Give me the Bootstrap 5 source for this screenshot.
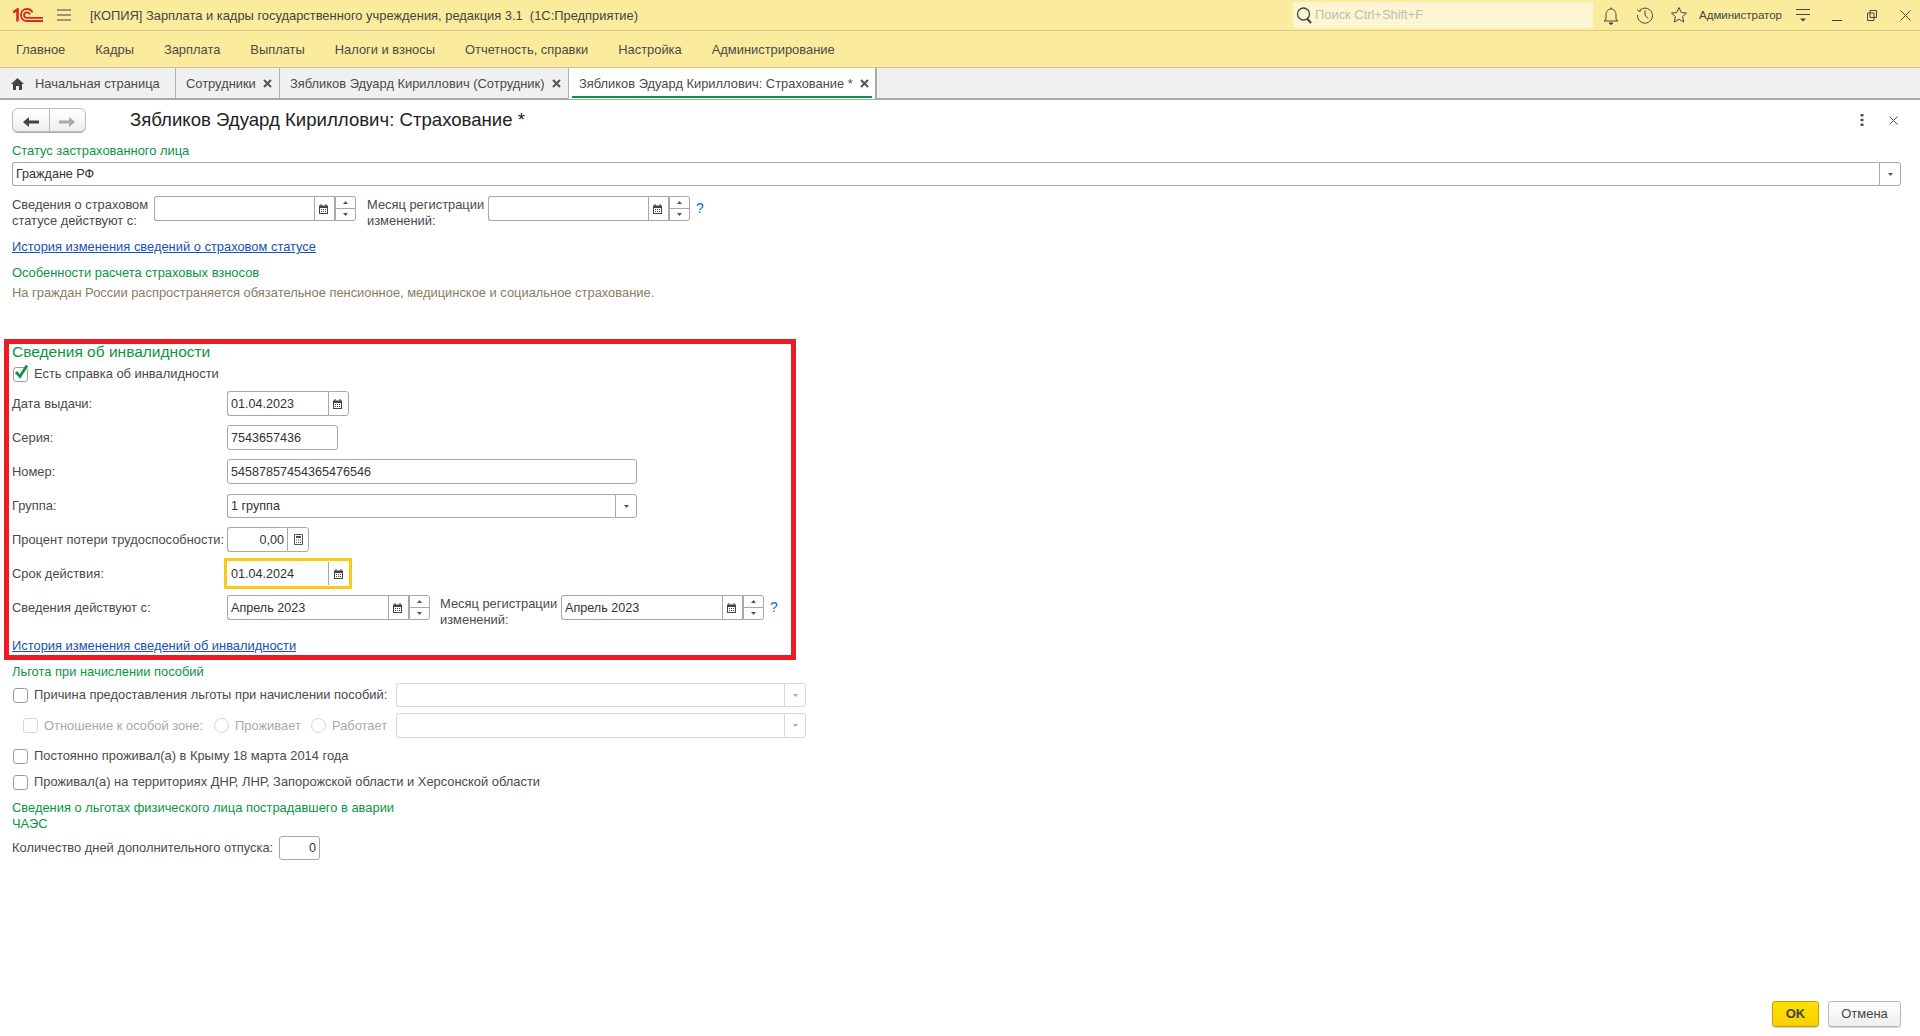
<!DOCTYPE html>
<html lang="ru">
<head>
    <meta charset="UTF-8">
    <meta name="viewport" content="width=device-width, initial-scale=1.0">
    <title>Зябликов Эдуард Кириллович: Страхование</title>
    <link rel="stylesheet" href="https://cdn.jsdelivr.net/npm/bootstrap@5.3.0/dist/css/bootstrap.min.css">
    <style>
        html, body { height: 100%; }
        body { font: 12.9px/16px "Liberation Sans", Arial, sans-serif; color: #4a4a4a; background: #fff; overflow: hidden; }
        .app { height: 1036px; }

        /* window title */
        .title-bar { height: 31px; background: #fbec9d; border-bottom: 1px solid #d8c98a; padding-left: 13px; color: #444; }
        .burger { margin-left: 14px; }
        .app-name { margin: 1px 0 0 19px; }
        .search-box { width: 300px; height: 26px; margin-left: auto; background: #fdf6d3; border-radius: 2px; padding-left: 3px; color: #bdbdb0; }
        .search-box span { margin-left: 2px; }
        .top-icon { width: 20px; height: 20px; }
        .top-icon + .top-icon { margin-left: 14px; }
        .user-name { font-size: 11.5px; margin: 0 0 0 10px; color: #444; }
        .win-lines { margin-left: 14px; }
        .win-min { margin-left: 22px; }
        .win-max { margin-left: 25px; }
        .win-close { margin-left: 23px; margin-right: 9px; }

        /* sections menu */
        .app-menu { height: 37px; background: #fbec9d; border-bottom: 1px solid #cfc388; padding-left: 1px; }
        .app-menu .nav-link { color: #4a4a4a; padding: 0 15px; line-height: 37px; }

        /* open tabs */
        .app-tabs { height: 32px; background: #f0f0f0; border-bottom: 2px solid #a8a8a8; flex-wrap: nowrap; }
        .app-tabs .nav-link { display: flex; align-items: center; height: 31px; margin: 0; padding: 0 7px 0 10px; border: 0; border-right: 1px solid #b0b0b0; border-radius: 0; color: #4a4a4a; background: transparent; }
        .app-tabs .nav-link.active { position: relative; background: #fff; color: #4a4a4a; border-left: 0; border-right: 2px solid #a8a8a8; padding-right: 6px; }
        .app-tabs .nav-link.active::after { content: ""; position: absolute; left: 3px; right: 3px; bottom: 1px; height: 2px; background: #0a9545; }
        .tab-home { width: 176px; padding-left: 11px !important; }
        .tab-home svg { margin-right: 11px; }
        .tab-staff { width: 104px; }
        .tab-person { width: 289px; }
        .tab-ins { width: 308px; }
        .tab-x { margin-left: auto; }

        /* form */
        .form-pane { padding: 0 19px 0 12px; }
        .doc-head { height: 24px; margin-top: 8px; }
        .doc-title { font-size: 18.6px; line-height: 24px; color: #222; margin: 0 0 0 44px; font-weight: 400; }
        .doc-close { margin-left: 25px; margin-right: 3px; }
        .nav-btns { width: 74px; height: 24px; }
        .nav-btns .btn { padding: 0; border-color: #bcbcbc; background: linear-gradient(#fff, #efefef); box-shadow: 0 1px 0 #aaa; }
        .cap { color: #0a9545; }
        .cap-big { font-size: 15.5px; }
        .note { color: #8a7c5f; }
        .doc-link { color: #1a4fb5; text-decoration: underline; }
        .hint { color: #1173b8; font-size: 14px; line-height: 25px; margin-left: 6px; text-decoration: none; }
        .two-line { line-height: 16px; }
        .lbl-a { width: 142px; margin-top: 1px; }
        .lbl-b { width: 121px; margin: 1px 0 0 11px; }
        .lbl-c { width: 121px; margin-left: 10px; height: 25px; padding-top: 1px; }
        .lh-field { line-height: 25px; }

        .mark-box { margin-left: -8px; width: 792px; height: 321px; border: 5px solid #ed1c24; padding: 0 3px; }

        .fld { flex-wrap: nowrap; height: 25px; width: auto; }
        .fld-s { height: 24px; }
        .fld .form-control { min-width: 0; height: 100%; padding: 0 3px; font: inherit; font-size: 12.6px; color: #333; border: 1px solid #a8a8a8; border-right: 0; border-radius: 3px 0 0 3px; box-shadow: none; }
        .fld.solo .form-control { border-right: 1px solid #a8a8a8; border-radius: 3px; }
        .fld .input-group-text { justify-content: center; padding: 0; margin: 0 !important; background: #fff; border: 1px solid #a8a8a8; border-radius: 0; }
        .fld .input-group-text:last-child { border-radius: 0 3px 3px 0; }
        .fld-off .form-control, .fld-off .input-group-text { border-color: #d9d9d9; background: #fff; }
        .fld .btn-cal { width: 21px; padding-right: 2px; }
        .btn-calc { width: 22px; }
        .btn-drop { width: 22px; }
        .btn-spin { width: 21px; flex-direction: column; align-items: stretch; }
        .btn-spin i { flex: 1; display: flex; align-items: center; justify-content: center; }
        .btn-spin i + i { border-top: 1px solid #a8a8a8; }
        .w-status { width: 1889px; }
        .w-period { width: 202px; }
        .w-date { width: 122px; }
        .w-series { width: 111px; }
        .w-wide { width: 410px; }
        .w-pct { width: 82px; }
        .w-month { width: 203px; }
        .w-days { width: 41px; }
        .w-reason { width: 410px; }
        .num .form-control { text-align: right; }

        .row-lbl { width: 215px; }
        .lbl-days { width: 267px; }
        .focus-wrap { width: 128px; height: 31px; margin-left: -3px; border: 3px solid #fac91e; }
        .focus-wrap .form-control { border: 0; padding-left: 4px; height: 100%; }
        .focus-wrap .input-group-text { border: 0; border-left: 1px solid #a8a8a8; background: #fff; height: 23px; align-self: center; }

        .form-check-input { width: 15px; height: 15px; margin: 0; border: 1px solid #9a9a9a; border-radius: 3px; box-shadow: none; }
        .form-check-input:checked { background-color: #fff; background-image: none; border-color: #9a9a9a; }
        .form-check-input[type=radio] { border-radius: 50%; }
        .form-check-input:disabled { opacity: 1; border-color: #d4d4d4; background-color: #fff; }
        .tick-holder { position: relative; margin-left: 1px; display: flex; }
        .tick-holder svg { position: absolute; left: 1px; top: -3px; }
        .chk-row { height: 16px; }
        label { margin-left: 6px; }
        .lbl-reason { width: 362px; }
        .chk-zone { margin-left: 11px; }
        .lbl-zone { width: 170px; }
        .lbl-lives { width: 76px; }
        .lbl-works { width: 64px; }
        .off { color: #a9a9a9; }

        .m3 { margin-top: 3px; } .m4 { margin-top: 4px; } .m5 { margin-top: 5px; } .m6 { margin-top: 6px; }
        .m9 { margin-top: 9px; } .m10 { margin-top: 10px; } .m11 { margin-top: 11px; } .m18 { margin-top: 18px; } .m38 { margin-top: 38px; }
        .wrap-400 { width: 400px; }

        .foot { padding: 0 19px 9px 0; margin-top: auto; gap: 9px; }
        .foot .btn { height: 26px; padding: 0; font-size: 13px; line-height: 24px; border-radius: 3px; color: #444; box-shadow: 0 1px 0 rgba(0,0,0,.15); }
        .btn-ok { width: 47px; font-weight: 700; background: linear-gradient(#ffe100, #f5d000); border-color: #bfa300; }
        .btn-no { width: 73px; background: linear-gradient(#fff, #eee); border-color: #b8b8b8; }
    </style>
</head>
<body>
    <svg width="0" height="0" class="position-absolute">
        <symbol id="ic-cal" viewBox="0 0 9 10">
            <path d="M0 1.500h9V10H0z" fill="#444"/>
            <path d="M1.500 0h1v2h-1zM6.500 0h1v2h-1z" fill="#444"/>
            <path d="M1 4h7v5H1z" fill="#fff"/>
            <path d="M2 5h1v1H2zM4 5h1v1H4zM6 5h1v1H6zM2 7h1v1H2zM4 7h1v1H4zM6 7h1v1H6z" fill="#444"/>
        </symbol>
        <symbol id="ic-calc" viewBox="0 0 9 11">
            <path d="M.5.5h8v10h-8z" fill="#fff" stroke="#555"/>
            <path d="M2 2h5v2H2zM2 5.500h1v1H2zM4 5.500h1v1H4zM6 5.500h1v1H6zM2 8h1v1H2zM4 8h1v1H4zM6 8h1v1H6z" fill="#555"/>
        </symbol>
        <symbol id="ic-x" viewBox="0 0 9 9">
            <path d="M1 1l7 7M8 1L1 8" stroke="#555" stroke-width="2" fill="none"/>
        </symbol>
        <symbol id="ic-up" viewBox="0 0 5 3"><path d="M0 3L2.500 0 5 3z" fill="#555"/></symbol>
        <symbol id="ic-down" viewBox="0 0 5 3"><path d="M0 0h5L2.500 3z" fill="#555"/></symbol>
        <symbol id="ic-drop" viewBox="0 0 5 3"><path d="M0 0h5L2.500 3z" fill="#555"/></symbol>
        <symbol id="ic-drop-off" viewBox="0 0 5 3"><path d="M0 0h5L2.500 3z" fill="#aaa"/></symbol>
    </svg>

    <div class="app d-flex flex-column">
        <div class="title-bar d-flex align-items-center">
            <svg width="30" height="14" viewBox="0 0 30 14" fill="none" stroke="#d8291f">
                <path d="M0 4.500L4.500 1.500V13.500" stroke-width="2.600"/>
                <path d="M19.500 4.500C18.500 2.200 16 1 14 1 10.500 1 8 3.500 8 7s2.500 6 6 6h16" stroke-width="1.800"/>
                <path d="M17 6.500C16.500 5 15.300 4.300 14 4.300 12.300 4.300 11 5.500 11 7s1.300 2.800 3 2.800h16" stroke-width="1.800"/>
            </svg>
            <svg class="burger" width="14" height="12" viewBox="0 0 14 12" stroke="#444"><path d="M0 1h14M0 6h14M0 11h14"/></svg>
            <span class="app-name">[КОПИЯ] Зарплата и кадры государственного учреждения, редакция 3.1&nbsp; (1С:Предприятие)</span>
            <div class="search-box d-flex align-items-center">
                <svg width="17" height="19" viewBox="0 0 17 19" fill="none" stroke="#444" stroke-width="1.300"><circle cx="7.500" cy="8" r="6"/><path d="M11.500 13l3.500 4" stroke-width="2"/></svg>
                <span>Поиск Ctrl+Shift+F</span>
            </div>
            <div class="d-flex align-items-center justify-content-center top-icon ms-2">
                <svg width="16" height="19" viewBox="0 0 16 19" fill="none" stroke="#444"><path d="M8 1.500V3M3 13.500V9c0-3.500 2-6 5-6s5 2.500 5 6v4.500l2 1.500H1z"/><path d="M6 17h4l-2 1.500z" fill="#444"/></svg>
            </div>
            <div class="d-flex align-items-center justify-content-center top-icon">
                <svg width="18" height="18" viewBox="0 0 18 18" fill="none" stroke="#444"><path d="M3.500 4.500A7.500 7.500 0 1 1 1.500 9"/><path d="M1.500 3.500l1.500 2 2.200-.8"/><path d="M9 4.500V9l3 3.500"/></svg>
            </div>
            <div class="d-flex align-items-center justify-content-center top-icon">
                <svg width="18" height="18" viewBox="0 0 18 18" fill="none" stroke="#444"><path d="M9 1.500l2.300 5 5.200.6-3.900 3.500 1.100 5.400L9 13.300 4.300 16l1.100-5.400L1.500 7.100l5.200-.6z"/></svg>
            </div>
            <span class="user-name">Администратор</span>
            <svg class="win-lines" width="14" height="14" viewBox="0 0 14 14" stroke="#444"><path d="M0 1.500h14M0 6.500h14"/><path d="M4 10.500h6l-3 3z" fill="#444" stroke="none"/></svg>
            <svg class="win-min" width="10" height="14" viewBox="0 0 10 14" stroke="#444"><path d="M0 12.500h10"/></svg>
            <svg class="win-max" width="10" height="11" viewBox="0 0 10 11" fill="none" stroke="#444"><path d="M3 .5h6.500v7H3zM.5 3H7v7.500H.5z" fill="#fbec9d"/></svg>
            <svg class="win-close" width="11" height="11" viewBox="0 0 11 11" stroke="#444"><path d="M.5.5l10 10M10.500.5l-10 10"/></svg>
        </div>

        <ul class="nav app-menu">
            <li class="nav-item"><a class="nav-link" href="#">Главное</a></li>
            <li class="nav-item"><a class="nav-link" href="#">Кадры</a></li>
            <li class="nav-item"><a class="nav-link" href="#">Зарплата</a></li>
            <li class="nav-item"><a class="nav-link" href="#">Выплаты</a></li>
            <li class="nav-item"><a class="nav-link" href="#">Налоги и взносы</a></li>
            <li class="nav-item"><a class="nav-link" href="#">Отчетность, справки</a></li>
            <li class="nav-item"><a class="nav-link" href="#">Настройка</a></li>
            <li class="nav-item"><a class="nav-link" href="#">Администрирование</a></li>
        </ul>

        <ul class="nav nav-tabs app-tabs">
            <li class="nav-item"><a class="nav-link tab-home" href="#"><svg width="13" height="12" viewBox="0 0 13 12" fill="#444"><path d="M6.500 0L13 6h-2v6H8V8H5v4H2V6H0z"/></svg>Начальная страница</a></li>
            <li class="nav-item"><a class="nav-link tab-staff" href="#">Сотрудники<svg class="tab-x" width="9" height="9"><use href="#ic-x"/></svg></a></li>
            <li class="nav-item"><a class="nav-link tab-person" href="#">Зябликов Эдуард Кириллович (Сотрудник)<svg class="tab-x" width="9" height="9"><use href="#ic-x"/></svg></a></li>
            <li class="nav-item"><a class="nav-link tab-ins active" href="#">Зябликов Эдуард Кириллович: Страхование *<svg class="tab-x" width="9" height="9"><use href="#ic-x"/></svg></a></li>
        </ul>

        <div class="form-pane">
            <div class="doc-head d-flex align-items-center">
                <div class="btn-group nav-btns">
                    <button class="btn" type="button"><svg width="16" height="12" viewBox="0 0 16 12" fill="#444"><path d="M0 6l6-5v3.500h10v3H6V11z"/></svg></button>
                    <button class="btn" type="button"><svg width="16" height="12" viewBox="0 0 16 12" fill="#aaa"><path d="M16 6l-6-5v3.500H0v3h10V11z"/></svg></button>
                </div>
                <h1 class="doc-title">Зябликов Эдуард Кириллович: Страхование *</h1>
                <svg class="ms-auto" width="4" height="12" viewBox="0 0 4 12" fill="#555"><path d="M.5 0h3v2.500h-3zM.5 4.700h3v2.500h-3zM.5 9.400h3V12h-3z"/></svg>
                <svg class="doc-close" width="9" height="9" viewBox="0 0 9 9" stroke="#555"><path d="M.5.5l8 8M8.500.5l-8 8"/></svg>
            </div>

            <div class="cap m11">Статус застрахованного лица</div>
            <div class="input-group fld fld-s w-status m3">
                <input class="form-control" type="text" value="Граждане РФ">
                <span class="input-group-text btn-drop"><svg width="5" height="3"><use href="#ic-drop"/></svg></span>
            </div>

            <div class="d-flex align-items-start m10">
                <div class="two-line lbl-a">Сведения о страховом<br>статусе действуют с:</div>
                <div class="input-group fld w-period">
                    <input class="form-control" type="text">
                    <span class="input-group-text btn-cal"><svg width="9" height="10"><use href="#ic-cal"/></svg></span>
                    <span class="input-group-text btn-spin"><i><svg width="5" height="3"><use href="#ic-up"/></svg></i><i><svg width="5" height="3"><use href="#ic-down"/></svg></i></span>
                </div>
                <div class="two-line lbl-b">Месяц регистрации<br>изменений:</div>
                <div class="input-group fld w-period">
                    <input class="form-control" type="text">
                    <span class="input-group-text btn-cal"><svg width="9" height="10"><use href="#ic-cal"/></svg></span>
                    <span class="input-group-text btn-spin"><i><svg width="5" height="3"><use href="#ic-up"/></svg></i><i><svg width="5" height="3"><use href="#ic-down"/></svg></i></span>
                </div>
                <a class="hint" href="#">?</a>
            </div>

            <div class="m10"><a class="doc-link" href="#">История изменения сведений о страховом статусе</a></div>
            <div class="cap m10">Особенности расчета страховых взносов</div>
            <div class="note m4">На граждан России распространяется обязательное пенсионное, медицинское и социальное страхование.</div>

            <div class="mark-box m38">
                <div class="cap cap-big">Сведения об инвалидности</div>
                <div class="d-flex align-items-center chk-row m6">
                    <span class="tick-holder">
                        <input class="form-check-input" type="checkbox" id="hasCert" checked>
                        <svg width="16" height="16" viewBox="0 0 16 16" fill="none" stroke="#0a9545" stroke-width="2.800"><path d="M2 8l4 4.500L13 1.500"/></svg>
                    </span>
                    <label for="hasCert">Есть справка об инвалидности</label>
                </div>

                <div class="d-flex align-items-center m9">
                    <span class="row-lbl">Дата выдачи:</span>
                    <div class="input-group fld w-date">
                        <input class="form-control" type="text" value="01.04.2023">
                        <span class="input-group-text btn-cal"><svg width="9" height="10"><use href="#ic-cal"/></svg></span>
                    </div>
                </div>
                <div class="d-flex align-items-center m9">
                    <span class="row-lbl">Серия:</span>
                    <div class="input-group fld solo w-series"><input class="form-control" type="text" value="7543657436"></div>
                </div>
                <div class="d-flex align-items-center m9">
                    <span class="row-lbl">Номер:</span>
                    <div class="input-group fld solo w-wide"><input class="form-control" type="text" value="54587857454365476546"></div>
                </div>
                <div class="d-flex align-items-center m10">
                    <span class="row-lbl">Группа:</span>
                    <div class="input-group fld fld-s w-wide">
                        <input class="form-control" type="text" value="1 группа">
                        <span class="input-group-text btn-drop"><svg width="5" height="3"><use href="#ic-drop"/></svg></span>
                    </div>
                </div>
                <div class="d-flex align-items-center m9">
                    <span class="row-lbl">Процент потери трудоспособности:</span>
                    <div class="input-group fld num w-pct">
                        <input class="form-control" type="text" value="0,00">
                        <span class="input-group-text btn-calc"><svg width="9" height="11"><use href="#ic-calc"/></svg></span>
                    </div>
                </div>
                <div class="d-flex align-items-center m6">
                    <span class="row-lbl">Срок действия:</span>
                    <div class="focus-wrap d-flex align-items-center">
                        <div class="input-group fld w-100">
                            <input class="form-control" type="text" value="01.04.2024">
                            <span class="input-group-text btn-cal"><svg width="9" height="10"><use href="#ic-cal"/></svg></span>
                        </div>
                    </div>
                </div>
                <div class="d-flex align-items-start m6">
                    <span class="row-lbl lh-field">Сведения действуют с:</span>
                    <div class="input-group fld w-month">
                        <input class="form-control" type="text" value="Апрель 2023">
                        <span class="input-group-text btn-cal"><svg width="9" height="10"><use href="#ic-cal"/></svg></span>
                        <span class="input-group-text btn-spin"><i><svg width="5" height="3"><use href="#ic-up"/></svg></i><i><svg width="5" height="3"><use href="#ic-down"/></svg></i></span>
                    </div>
                    <div class="two-line lbl-c">Месяц регистрации<br>изменений:</div>
                    <div class="input-group fld w-month">
                        <input class="form-control" type="text" value="Апрель 2023">
                        <span class="input-group-text btn-cal"><svg width="9" height="10"><use href="#ic-cal"/></svg></span>
                        <span class="input-group-text btn-spin"><i><svg width="5" height="3"><use href="#ic-up"/></svg></i><i><svg width="5" height="3"><use href="#ic-down"/></svg></i></span>
                    </div>
                    <a class="hint" href="#">?</a>
                </div>
                <div class="m18"><a class="doc-link" href="#">История изменения сведений об инвалидности</a></div>
            </div>

            <div class="cap m4">Льгота при начислении пособий</div>
            <div class="d-flex align-items-center m3">
                <span class="tick-holder"><input class="form-check-input" type="checkbox" id="reason"></span>
                <label class="lbl-reason" for="reason">Причина предоставления льготы при начислении пособий:</label>
                <div class="input-group fld fld-s fld-off w-reason">
                    <input class="form-control" type="text" disabled>
                    <span class="input-group-text btn-drop"><svg width="5" height="3"><use href="#ic-drop-off"/></svg></span>
                </div>
            </div>
            <div class="d-flex align-items-center off m6">
                <input class="form-check-input chk-zone" type="checkbox" id="zone" disabled>
                <label class="lbl-zone" for="zone">Отношение к особой зоне:</label>
                <input class="form-check-input" type="radio" name="zoneKind" id="lives" disabled>
                <label class="lbl-lives" for="lives">Проживает</label>
                <input class="form-check-input" type="radio" name="zoneKind" id="works" disabled>
                <label class="lbl-works" for="works">Работает</label>
                <div class="input-group fld fld-off w-reason">
                    <input class="form-control" type="text" disabled>
                    <span class="input-group-text btn-drop"><svg width="5" height="3"><use href="#ic-drop-off"/></svg></span>
                </div>
            </div>
            <div class="d-flex align-items-center chk-row m10">
                <span class="tick-holder"><input class="form-check-input" type="checkbox" id="crimea"></span>
                <label for="crimea">Постоянно проживал(а) в Крыму 18 марта 2014 года</label>
            </div>
            <div class="d-flex align-items-center chk-row m10">
                <span class="tick-holder"><input class="form-check-input" type="checkbox" id="dnr"></span>
                <label for="dnr">Проживал(а) на территориях ДНР, ЛНР, Запорожской области и Херсонской области</label>
            </div>
            <div class="cap wrap-400 m10">Сведения о льготах физического лица пострадавшего в аварии ЧАЭС</div>
            <div class="d-flex align-items-center m4">
                <span class="lbl-days">Количество дней дополнительного отпуска:</span>
                <div class="input-group fld fld-s solo num w-days"><input class="form-control" type="text" value="0"></div>
            </div>
        </div>

        <div class="foot d-flex justify-content-end">
            <button class="btn btn-ok" type="button">OK</button>
            <button class="btn btn-no" type="button">Отмена</button>
        </div>
    </div>

    <script src="https://cdn.jsdelivr.net/npm/bootstrap@5.3.0/dist/js/bootstrap.bundle.min.js"></script>
</body>
</html>
